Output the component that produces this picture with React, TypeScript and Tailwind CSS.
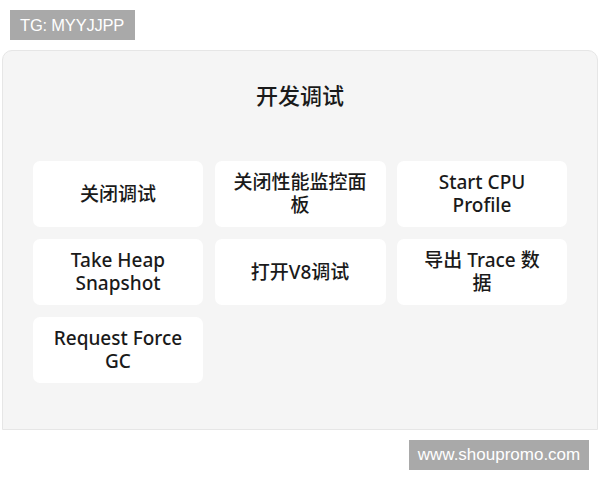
import React from "react";

const actions = [
  "关闭调试",
  "关闭性能监控面\n板",
  "Start CPU\nProfile",
  "Take Heap\nSnapshot",
  "打开V8调试",
  "导出 Trace 数\n据",
  "Request Force\nGC",
];

export default function App() {
  return (
    <div className="w-[600px] h-[480px] bg-white relative overflow-hidden">
      <div className="pt-[10px] pl-[10px]">
        <div className="w-[125px] h-[30px] bg-[#a9a9a9] text-white text-[16.5px] flex items-center pl-[10px] font-['Liberation_Sans',sans-serif] tracking-[-0.2px]">
          TG: MYYJJPP
        </div>
      </div>

      <div className="mt-[10px] mx-[2px] h-[380px] bg-[#f5f5f5] border border-[#e6e6e6] rounded-t-[10px] font-['Noto_Sans','Noto_Sans_CJK_SC',sans-serif] text-[#1a1a1a]">
        <div className="h-[110px] pt-[30px] text-center text-[22px] font-medium leading-[28px]">
          开发调试
        </div>
        <div className="grid grid-cols-[170px_171px_170px] gap-x-[11.5px] gap-y-[12px] pl-[30px]">
          {actions.map((label) => (
            <div
              key={label}
              className="h-[66px] bg-white rounded-[7px] flex items-center justify-center text-center whitespace-pre-line text-[19px] leading-[23px] font-medium"
            >
              {label}
            </div>
          ))}
        </div>
      </div>

      <div className="absolute left-[409px] top-[440px] w-[180px] h-[30px] bg-[#a9a9a9] text-white text-[17px] flex items-center justify-center font-['Liberation_Sans',sans-serif]">
        www.shoupromo.com
      </div>
    </div>
  );
}
